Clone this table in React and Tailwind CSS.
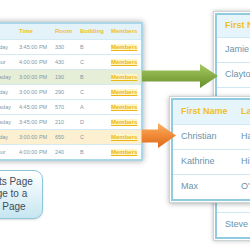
import React from 'react';

const classes = [
    { day: 'Tue/Friday', time: '3:45:00 PM', room: '330', building: 'B' },
    { day: 'Mon/Thur', time: '4:00:00 PM', room: '430', building: 'C' },
    { day: 'Wednesday', time: '3:00:00 PM', room: '190', building: 'B', tone: 'green' },
    { day: 'Tue/Friday', time: '3:00:00 PM', room: '290', building: 'C' },
    { day: 'Wednesday', time: '4:45:00 PM', room: '570', building: 'A' },
    { day: 'Wednesday', time: '3:45:00 PM', room: '210', building: 'D' },
    { day: 'Tue/Friday', time: '3:00:00 PM', room: '650', building: 'C', tone: 'orange' },
    { day: 'Mon/Thur', time: '4:00:00 PM', room: '240', building: 'B' },
];

const students = ['Jamie', 'Clayton', 'Nancy', 'Laura', 'Andrew', 'Janet', 'Michael', 'Steve'];

const members = [
    { first: 'Christian', last: 'Hardy' },
    { first: 'Kathrine', last: 'Hill' },
    { first: 'Max', last: "O'Neil" },
];

const rowTone = {
    green: 'bg-[#e6eed8]',
    orange: 'bg-[#fdf0d0]',
};

const ClassesTable = () => (
    <div className="absolute left-[-24px] top-[22px] w-[167px] border-2 border-[#a9d7e8] bg-white shadow-[0_0_6px_rgba(0,0,0,0.35)]">
        <div className="grid grid-cols-[37px_36px_25px_31px_34px] h-[15px] items-center bg-[#e4f3f9] text-[6px] font-bold text-[#f0c12c]">
            <div className="pl-[4px]">Day</div>
            <div className="pl-[4px]">Time</div>
            <div className="pl-[4px]">Room</div>
            <div className="pl-[4px]">Building</div>
            <div className="pl-[4px]">Members</div>
        </div>
        {classes.map((row, i) => (
            <div
                key={i}
                className={`grid grid-cols-[37px_36px_25px_31px_34px] h-[15px] items-center border-t border-[#d3eaf2] text-[5.5px] text-[#8199a9] whitespace-nowrap ${rowTone[row.tone] || ''}`}
            >
                <div className="pl-[4px]">{row.day}</div>
                <div className="pl-[4px]">{row.time}</div>
                <div className="pl-[4px]">{row.room}</div>
                <div className="pl-[4px]">{row.building}</div>
                <div className="pl-[4px]">
                    <span className="text-[6px] font-bold text-[#ecb713] underline bg-[#fff6c8]">Members</span>
                </div>
            </div>
        ))}
    </div>
);

const StudentsTable = () => (
    <div className="absolute left-[213px] top-[11px] w-[80px] border border-[#cdd5d9] p-[1px] bg-white shadow-[0_0_4px_rgba(0,0,0,0.25)]">
        <div className="border-2 border-[#92cbe0]">
            <div className="h-[22px] flex items-center pl-[8px] bg-[#e6f5fb] text-[9px] font-bold text-[#f0bf22] whitespace-nowrap">
                First Name
            </div>
            {students.map((name) => (
                <div key={name} className="h-[25px] flex items-center pl-[8px] border-t border-[#cfe8f1] text-[9px] text-[#6b93aa]">
                    {name}
                </div>
            ))}
        </div>
    </div>
);

const MembersTable = () => (
    <div className="absolute left-[169px] top-[96px] w-[130px] border border-[#cdd5d9] p-[1px] bg-white shadow-[0_1px_5px_rgba(0,0,0,0.3)]">
        <div className="border-2 border-[#92cbe0]">
            <div className="grid grid-cols-[60px_1fr] h-[24px] items-center bg-[#e6f5fb] text-[9px] font-bold text-[#f0bf22] whitespace-nowrap">
                <div className="pl-[8px]">First Name</div>
                <div className="pl-[8px]">Last Name</div>
            </div>
            {members.map((m) => (
                <div key={m.first} className="grid grid-cols-[60px_1fr] h-[25px] items-center border-t border-[#cfe8f1] text-[9px] text-[#6b93aa]">
                    <div className="pl-[8px]">{m.first}</div>
                    <div className="pl-[8px]">{m.last}</div>
                </div>
            ))}
        </div>
    </div>
);

const Arrows = () => (
    <svg className="absolute left-0 top-0" width="250" height="250" viewBox="0 0 250 250">
        <defs>
            <linearGradient id="greenFill" x1="0" y1="0" x2="0" y2="1">
                <stop offset="0" stopColor="#a8c766" />
                <stop offset="0.5" stopColor="#86ad44" />
                <stop offset="1" stopColor="#668f2c" />
            </linearGradient>
            <linearGradient id="orangeFill" x1="0" y1="0" x2="0" y2="1">
                <stop offset="0" stopColor="#f8b36a" />
                <stop offset="0.5" stopColor="#f18a36" />
                <stop offset="1" stopColor="#d9691c" />
            </linearGradient>
        </defs>
        <polygon points="142,70.5 200,70.5 200,64 218,76 200,88 200,81.5 142,81.5" fill="url(#greenFill)" />
        <polygon points="142,129.5 158,129.5 158,123 176,135.5 158,148 158,142.5 142,142.5" fill="url(#orangeFill)" />
    </svg>
);

export default function App() {
    return (
        <div className="relative w-[250px] h-[250px] overflow-hidden bg-white font-['Liberation_Sans',Arial,sans-serif]">
            <ClassesTable />
            <StudentsTable />
            <MembersTable />
            <div className="absolute left-[-43px] top-[170px] w-[86px] h-[49px] flex items-center justify-center rounded-[9px] border border-[#8ec6da] bg-gradient-to-b from-white to-[#c6e6f1] shadow-[0_1px_2px_rgba(0,0,0,0.15)]">
                <p className="text-center text-[10px] leading-[12.5px] text-[#3e4d5a] whitespace-nowrap">
                    Students Page
                    <br />
                    Change to a
                    <br />
                    Class Page
                </p>
            </div>
            <Arrows />
        </div>
    );
}
